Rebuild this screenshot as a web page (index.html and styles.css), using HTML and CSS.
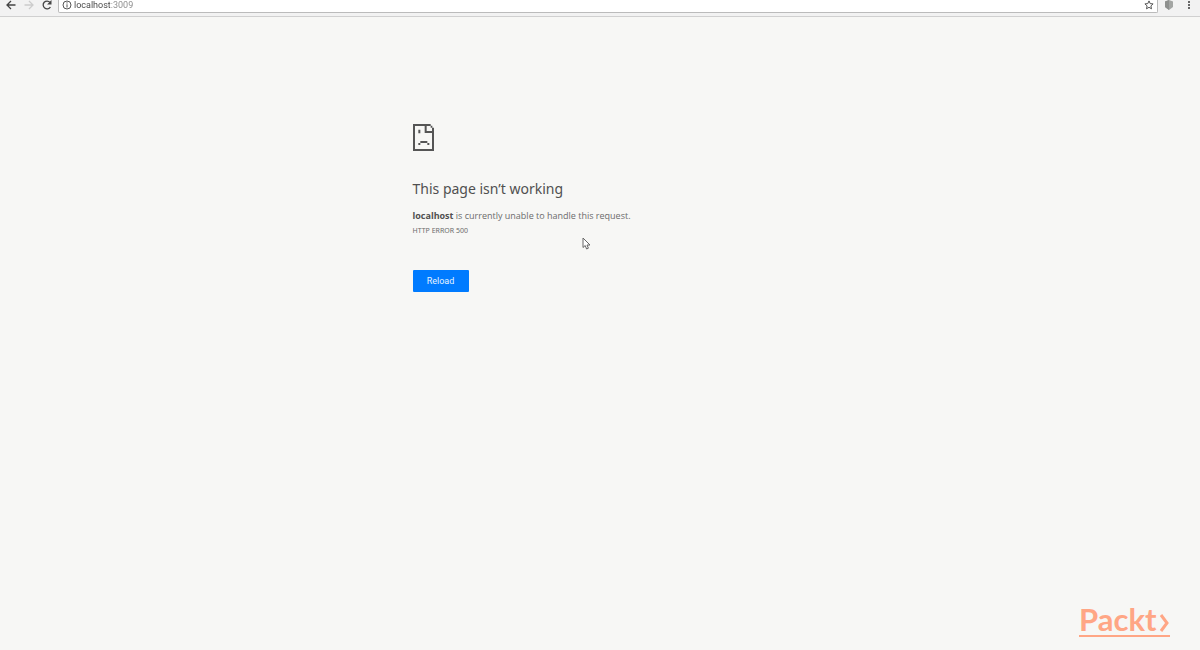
FILE: index.html
```html
<!DOCTYPE html>
<html lang="en">
<head>
  <meta charset="UTF-8">
  <meta name="viewport" content="width=device-width, initial-scale=1.0">
  <title>localhost</title>
  <link rel="stylesheet" href="styles.css">
</head>
<body>

<header class="toolbar">
  <nav class="tools">
    <button class="tool" aria-label="Back">
      <svg width="10" height="10" viewBox="0 0 10 10"><path d="M9.5 5H1M5 1L1 5l4 4" stroke="#444" stroke-width="1.300"/></svg>
    </button>
    <button class="tool" aria-label="Forward" disabled>
      <svg width="10" height="10" viewBox="0 0 10 10"><path d="M.5 5H9M5 1l4 4-4 4" stroke="#ccc" stroke-width="1.300"/></svg>
    </button>
    <button class="tool" aria-label="Reload this page">
      <svg width="10" height="10" viewBox="0 0 10 10"><path d="M8.4 7A3.9 3.9 0 1 1 8 2.4" stroke="#444" stroke-width="1.300"/><path d="M9.5 0v4.4H5.1z" fill="#444"/></svg>
    </button>
  </nav>
  <div class="address">
    <svg width="10" height="10" viewBox="0 0 10 10"><circle cx="5" cy="5" r="4" stroke="#555"/><path d="M5 4.300v3.200M5 2.300v1.200" stroke="#555"/></svg>
    <input class="url" type="text" value="localhost:3009" aria-label="Address">
    <button class="tool" aria-label="Bookmark this page">
      <svg width="10" height="10" viewBox="0 0 10 10"><path d="M5 .9l1.200 2.700 2.900.3-2.200 2 .6 2.900L5 7.300 2.500 8.800l.6-2.900-2.200-2 2.900-.3z" stroke="#555"/></svg>
    </button>
  </div>
  <div class="tools">
    <button class="tool" aria-label="Extension">
      <svg width="10" height="10" viewBox="0 0 10 10"><path d="M5 0l4 1.500v5.500L5 10 1 7V1.500z" fill="#a3a5a3"/><path d="M5 0v10L1 7V1.500z" fill="#8e908e"/></svg>
    </button>
    <button class="tool" aria-label="Menu">
      <svg width="10" height="10" viewBox="0 0 10 10"><path d="M4 1h2v2H4zM4 4h2v2H4zM4 7h2v2H4z" fill="#666"/></svg>
    </button>
  </div>
</header>

<main class="error">
  <svg class="sad-page" width="21" height="27" viewBox="0 0 63 81">
    <path d="M0 0h53v6H6v69h51V27H35V6h6v15h16V11h6v70H0zM53 5h5v6h-5z"/>
    <path d="M16 17h6v11h-6zM22 51h21v6H22zM16 57h6v6h-6zM43 57h6v6h-6z"/>
  </svg>
  <h1>This page isn’t working</h1>
  <p class="message"><strong>localhost</strong> is currently unable to handle this request.</p>
  <p class="code">HTTP ERROR 500</p>
  <button class="reload">Reload</button>
</main>

<svg class="cursor" width="9" height="13" viewBox="0 0 9 13">
  <path d="M1 1v9.500l2.200-2 1.400 3.500 1.800-.8L5 8h3z" fill="#fff" stroke="#666"/>
</svg>

<div class="brand">
  <span>Packt</span>
  <svg width="11" height="18" viewBox="0 0 11 18"><path d="M2 1l6 8-6 8" stroke="#ffa685" stroke-width="3"/></svg>
</div>

</body>
</html>
```
FILE: styles.css
```css
* {
  box-sizing: border-box;
}
body {
  margin: 0;
  min-height: 100vh;
  background-color: #f7f7f5;
  color: #6c6c6c;
  font-family: "Noto Sans", "Open Sans", sans-serif;
}
svg {
  display: block;
  fill: none;
  flex: none;
}
button {
  border: 0;
  padding: 0;
  background: none;
  font-family: inherit;
}
.toolbar {
  display: flex;
  gap: 6px;
  height: 17px;
  padding: 0 6px 3px;
  background-color: #f2f2f2;
  border-bottom: 1px solid #d0d0d0;
}
.tools {
  display: flex;
  gap: 8px;
}
.tools:last-child {
  gap: 10px;
}
.tool {
  width: 10px;
  height: 10px;
}
.address {
  display: flex;
  flex: 1;
  padding: 0 3px;
  background-color: #fff;
  border: 1px solid #bbb;
  border-top: 0;
  border-radius: 0 0 2px 2px;
}
.url {
  flex: 1;
  min-width: 0;
  height: 10px;
  padding: 0;
  margin-left: 2px;
  border: 0;
  outline: 0;
  font-family: Roboto, "Noto Sans", sans-serif;
  font-size: 9px;
  line-height: 10px;
  /* host is dark, port is grey */
  color: transparent;
  background: linear-gradient(to right, #444 36px, #888 36px);
  -webkit-background-clip: text;
  background-clip: text;
}
.error {
  width: 375px;
  max-width: 100%;
  margin: 0 auto;
  padding-top: 107px;
}
.sad-page {
  fill: #555;
}
h1 {
  margin: 27px 0 0;
  color: #505050;
  font-size: 14px;
  font-weight: 400;
  line-height: 22px;
}
.message {
  margin: 8px 0 0;
  font-family: "Open Sans", "Noto Sans", sans-serif;
  font-size: 9px;
  line-height: 15px;
}
.message strong {
  color: #505050;
}
.code {
  margin: 0;
  font-size: 7px;
  line-height: 15px;
}
.reload {
  display: block;
  width: 56px;
  height: 22px;
  margin-top: 32px;
  border-radius: 1px;
  background-color: #007bff;
  color: #e6f3ff;
  font-family: Roboto, sans-serif;
  font-size: 9px;
}
.cursor {
  position: absolute;
  left: 582px;
  top: 237px;
}
.brand {
  position: absolute;
  right: 30px;
  bottom: 13px;
  display: flex;
  align-items: flex-end;
  justify-content: space-between;
  width: 91px;
  border-bottom: 2px solid #ffa685;
  color: #ffa685;
  font-family: Lato, sans-serif;
  font-size: 31px;
  font-weight: 700;
  line-height: 32px;
}
.brand svg {
  margin-bottom: 3px;
}
```
